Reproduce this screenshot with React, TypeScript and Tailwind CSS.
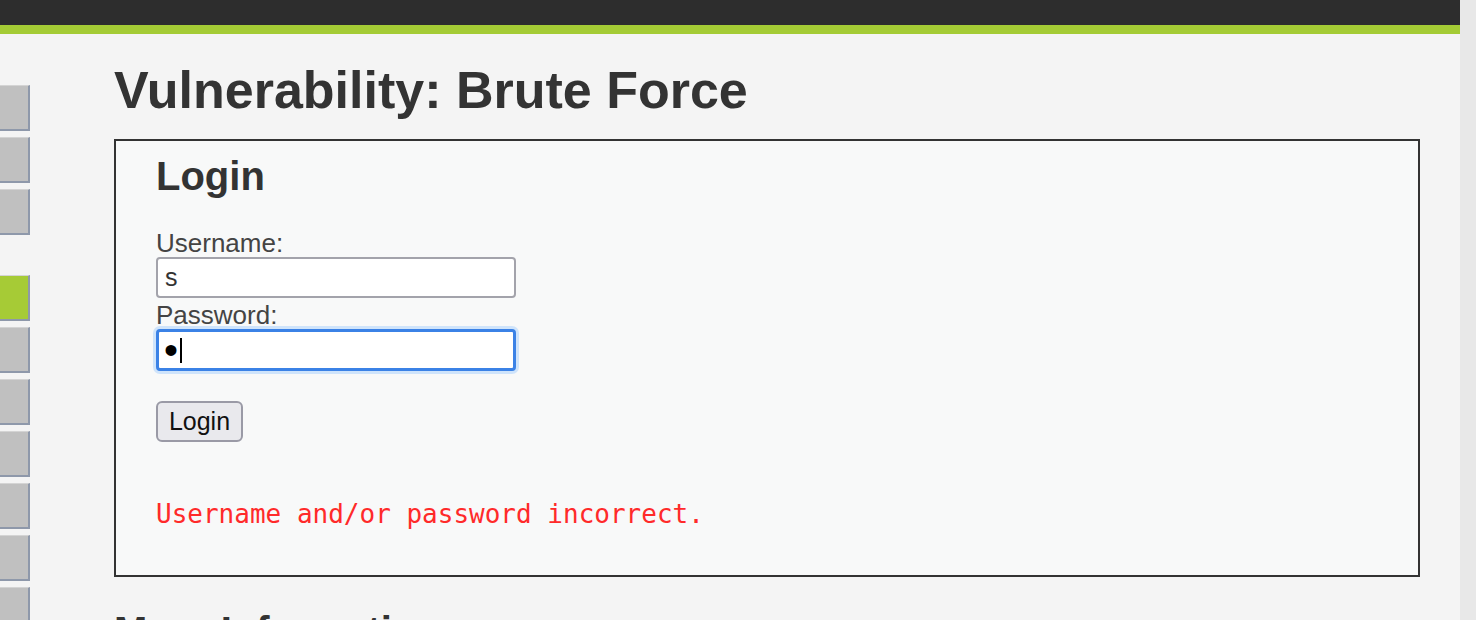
import React from "react";

const sans = "font-['Liberation_Sans',Arial,sans-serif]";

function MenuButton({ active = false }: { active?: boolean }) {
  return (
    <div
      className={`h-[46px] w-[30px] shrink-0 border-t border-t-[#d4d4d4] border-r-2 border-b-2 border-r-[#8e98aa] border-b-[#8e98aa] ${
        active ? "bg-[#a6cb36]" : "bg-[#c0c0c0]"
      }`}
    />
  );
}

export default function App() {
  return (
    <div className={`flex h-[620px] w-[1476px] overflow-hidden bg-[#f4f4f4] ${sans}`}>
      <div className="flex w-[1460px] flex-col">
        <div className="h-[25px] shrink-0 bg-[#2d2d2d]" />
        <div className="h-[9px] shrink-0 bg-[#a4cb35]" />

        <div className="flex shrink-0">
          {/* side menu */}
          <div className="flex w-[114px] flex-col">
            <div className="mt-[51px] flex flex-col gap-[6px]">
              <MenuButton />
              <MenuButton />
              <MenuButton />
            </div>
            <div className="mt-[40px] flex flex-col gap-[6px]">
              <MenuButton active />
              <MenuButton />
              <MenuButton />
              <MenuButton />
              <MenuButton />
              <MenuButton />
              <MenuButton />
            </div>
          </div>

          {/* body */}
          <div className="flex-1 pr-[40px]">
            <h1 className="mt-[30px] text-[52px] font-bold leading-none text-[#333]">
              Vulnerability: Brute Force
            </h1>

            <div className="mt-[23px] border-2 border-[#333] bg-[#f8f9f9] pb-[48px] pl-[40px] pt-[15px]">
              <h2 className="text-[40px] font-bold leading-none text-[#333]">Login</h2>

              <form className="mt-[34px] flex flex-col items-start" onSubmit={(e) => e.preventDefault()}>
                <label className="text-[26px] leading-none text-[#444]">Username:</label>
                <input
                  type="text"
                  readOnly
                  value="s"
                  className="mt-[1px] h-[41px] w-[360px] rounded-[4px] border-2 border-[#a3a3ab] bg-white px-[7px] text-[25px] text-[#333] outline-none"
                />
                <label className="mt-[4px] text-[26px] leading-none text-[#444]">Password:</label>
                <div className="relative mt-[1px]">
                  <input
                    type="password"
                    readOnly
                    value="a"
                    className="h-[42px] w-[360px] rounded-[4px] border-[3px] border-[#3b82e6] bg-white px-[5px] text-[40px] leading-none text-black shadow-[0_0_0_3px_#cfe4fb] outline-none"
                  />
                  <span className="absolute left-[24px] top-[9px] h-[25px] w-[2px] bg-black" />
                </div>

                <button
                  type="submit"
                  className="mt-[30px] h-[41px] w-[87px] rounded-[6px] border-2 border-[#9a9aa6] bg-[#e9e9ed] text-[25px] text-[#111]"
                >
                  Login
                </button>
              </form>

              <pre className="mt-[59px] font-['DejaVu_Sans_Mono',monospace] text-[26px] leading-none text-[#ff2a2a]">
                Username and/or password incorrect.
              </pre>
            </div>

            <h2 className="mt-[34px] text-[40px] font-bold leading-none text-[#333]">More Information</h2>
          </div>
        </div>
      </div>
      <div className="w-[16px] bg-[#e8e8e8]" />
    </div>
  );
}
